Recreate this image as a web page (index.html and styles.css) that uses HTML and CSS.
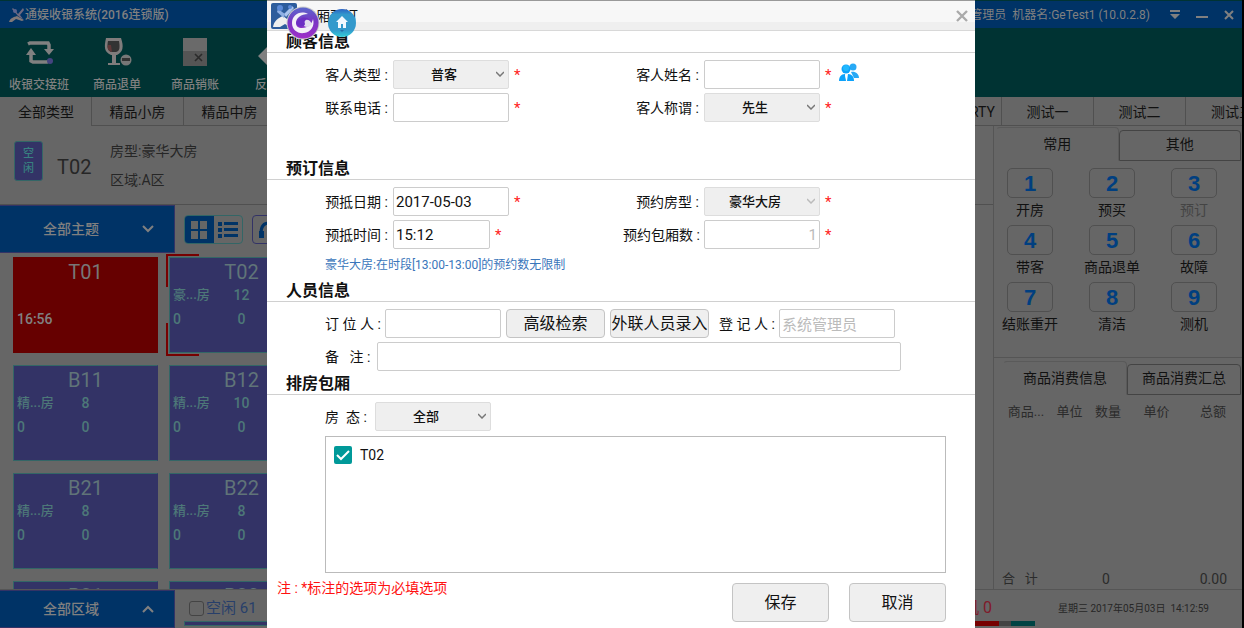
FILE: index.html
```html
<!DOCTYPE html>
<html lang="zh-CN">
<head>
<meta charset="utf-8">
<meta name="viewport" content="width=device-width, initial-scale=1">
<title>通娱收银系统</title>
<link rel="stylesheet" href="styles.css">
</head>
<body>
<div class="app">
  <header class="titlebar">
    <svg class="app-logo" width="18" height="16" viewBox="0 0 18 16"><path d="M1 15c1-4 5-5 8-6l7 4-2 1-6-2-4 3z" fill="#807878"/><path d="M5 1l5 6 5-6 1 2-4 5 3 4-2-1-3-2-6-7z" fill="#6e6a80"/><circle cx="7" cy="4" r="2" fill="#5d6590"/></svg>
    <span class="app-name">通娱收银系统(2016连锁版)</span>
    <span class="session">系统管理员&nbsp; 机器名:GeTest1 (10.0.2.8)</span>
    <button class="win-btn" aria-label="菜单"><svg width="12" height="12" viewBox="0 0 12 12"><path d="M1 1h10v2H1zM1 5h10l-5 5z" fill="#808080"/></svg></button>
    <button class="win-btn" aria-label="最小化"><svg width="12" height="12" viewBox="0 0 12 12"><path d="M0 7h12v2H0z" fill="#808080"/></svg></button>
    <button class="win-btn" aria-label="关闭"><svg width="12" height="12" viewBox="0 0 12 12"><path d="M2 2l8 8M10 2l-8 8" stroke="#808080" stroke-width="2"/></svg></button>
  </header>

  <nav class="toolbar">
    <button class="tool"><svg width="32" height="32" viewBox="0 0 32 32"><path d="M5 7l2-1h18l1 2v5M26 24l-2 1H10l-2-1v-8" fill="none" stroke="#808080" stroke-width="3.5"/><path d="M21 12h10l-5 6zM3 18l5-7 5 7z" fill="#808080"/><circle cx="27" cy="24" r="3" fill="#444480"/></svg>收银交接班</button>
    <button class="tool"><svg width="32" height="32" viewBox="0 0 32 32"><path d="M5 1h15c3 9 2 14-4 17h-6C3 15 3 10 5 1z" fill="#807c7c"/><path d="M7 4h11c1 6 1 10-3 11h-5C6 13 6 9 7 4z" fill="#333"/><path d="M7 8h3l1 7C7 14 6 11 7 8z" fill="#603838"/><path d="M11 17h4v9h4v2H7v-2h4z" fill="#807c7c"/><circle cx="25" cy="23" r="5.5" fill="#777"/><path d="M21 21h8v3h-8z" fill="#333"/></svg>商品退单</button>
    <button class="tool"><svg width="32" height="32" viewBox="0 0 32 32"><path d="M4 1h24v28H4z" fill="#6a6a6a"/><path d="M4 14h24v15H4z" fill="#555"/><path d="M16 17l7 7M23 17l-7 7" stroke="#2b2b2b" stroke-width="1.6"/></svg>商品销账</button>
    <button class="tool"><svg width="32" height="32" viewBox="0 0 32 32"><path d="M1 19L13 7v7h16v10H13v7z" fill="#808080"/></svg>反结账</button>
  </nav>

  <div class="type-tabs">
    <button class="type-tab active">全部类型</button>
    <button class="type-tab">精品小房</button>
    <button class="type-tab">精品中房</button>
    <span class="tab-fill"></span>
    <button class="type-tab party">PARTY</button>
    <button class="type-tab">测试一</button>
    <button class="type-tab">测试二</button>
    <button class="type-tab cut">测试三</button>
  </div>

  <main class="workspace">
    <section class="rooms">
      <div class="room-info">
        <span class="state-badge">空<br>闲</span>
        <span class="room-code">T02</span>
        <div class="room-meta"><span>房型:豪华大房</span><span>区域:A区</span></div>
      </div>
      <div class="filter-row">
        <button class="block-select">全部主题<svg width="12" height="8" viewBox="0 0 12 8"><path d="M1 1l5 5 5-5" fill="none" stroke="#808080" stroke-width="2"/></svg></button>
        <div class="view-switch">
          <button class="view on" aria-label="网格"><svg width="18" height="20" viewBox="0 0 18 20"><path d="M1 1h7v8H1zM10 1h7v8h-7zM1 11h7v8H1zM10 11h7v8h-7z" fill="#666"/></svg></button>
          <button class="view" aria-label="列表"><svg width="20" height="18" viewBox="0 0 20 18"><path d="M0 1h4v4H0zM6 1h14v3H6zM0 7h4v4H0zM6 7h14v3H6zM0 13h4v4H0zM6 13h14v3H6z" fill="#036"/></svg></button>
        </div>
        <button class="service" aria-label="服务"><svg width="20" height="20" viewBox="0 0 20 20"><path d="M4 13C4 6 7 3 12 3s7 4 7 9" fill="none" stroke="#036" stroke-width="3"/><path d="M2 11h5v7H2zM14 11h4v7h-4z" fill="#036"/></svg></button>
      </div>
      <div class="tiles">
        <button class="tile busy"><b>T01</b><span></span><span></span><span></span><span class="time">16:56</span></button>
        <button class="tile picked"><b>T02</b><span>豪...房</span><span class="num">12</span><span></span><span class="low">0</span><span class="num">0</span></button>
        <button class="tile"><b>B11</b><span>精...房</span><span class="num">8</span><span></span><span class="low">0</span><span class="num">0</span></button>
        <button class="tile"><b>B12</b><span>精...房</span><span class="num">10</span><span></span><span class="low">0</span><span class="num">0</span></button>
        <button class="tile"><b>B21</b><span>精...房</span><span class="num">8</span><span></span><span class="low">0</span><span class="num">0</span></button>
        <button class="tile"><b>B22</b><span>精...房</span><span class="num">8</span><span></span><span class="low">0</span><span class="num">0</span></button>
        <button class="tile"><b>B31</b></button>
        <button class="tile"><b>B32</b></button>
      </div>
    </section>

    <aside class="side">
      <div class="side-tabs">
        <button class="side-tab active">常用</button>
        <button class="side-tab">其他</button>
      </div>
      <div class="keys">
        <button class="key"><b>1</b>开房</button>
        <button class="key"><b>2</b>预买</button>
        <button class="key off"><b>3</b>预订</button>
        <button class="key"><b>4</b>带客</button>
        <button class="key"><b>5</b>商品退单</button>
        <button class="key"><b>6</b>故障</button>
        <button class="key"><b>7</b>结账重开</button>
        <button class="key"><b>8</b>清洁</button>
        <button class="key"><b>9</b>测机</button>
      </div>
      <div class="side-tabs goods-tabs">
        <button class="side-tab active">商品消费信息</button>
        <button class="side-tab">商品消费汇总</button>
      </div>
      <table class="goods">
        <thead><tr><th class="c1">商品...</th><th class="c2">单位</th><th class="c3">数量</th><th class="c4">单价</th><th class="c5">总额</th></tr></thead>
      </table>
      <div class="total"><span class="total-name">合&nbsp;&nbsp; 计</span><span class="total-count">0</span><span class="total-sum">0.00</span></div>
    </aside>
  </main>

  <footer class="statusbar">
    <button class="block-select">全部区域<svg width="12" height="8" viewBox="0 0 12 8"><path d="M1 7l5-5 5 5" fill="none" stroke="#808080" stroke-width="2"/></svg></button>
    <div class="idle">
      <label class="idle-label"><input type="checkbox" class="idle-box">空闲 61</label>
      <span class="idle-bar"></span>
    </div>
    <div class="test">
      <span class="test-label">机 0</span>
      <span class="test-bar"><i class="bar-red"></i><i class="bar-gray"></i><i class="bar-teal"></i></span>
    </div>
    <time class="clock">星期三 2017年05月03日&nbsp; 14:12:59</time>
  </footer>

  <div class="overlay">
    <form class="dialog" role="dialog" aria-label="包厢预订">
      <header class="dialog-head">
        <svg class="dialog-icon" width="26" height="26" viewBox="0 0 26 26"><rect width="26" height="26" rx="2" fill="#2d5c9c"/><path d="M2 24c1-6 5-9 10-11l12 9-3 3-7-4-5 3z" fill="#eee"/><path d="M13 11l8-8 2 2-8 9z" fill="#a9c3ee"/><path d="M7 6l7 5-1 4-7-6z" fill="#8fb0e4"/><circle cx="9" cy="5" r="3" fill="#5b8ad8"/><circle cx="19" cy="4" r="2" fill="#5b8ad8"/></svg>
        <h1 class="dialog-title">包厢预订</h1>
        <button type="button" class="close" aria-label="关闭"><svg width="12" height="12" viewBox="0 0 12 12"><path d="M1 1l10 10M11 1L1 11" stroke="#aaa" stroke-width="2.4"/></svg></button>
        <svg class="orb orb-swirl" width="34" height="34" viewBox="0 0 34 34"><defs><linearGradient id="g1" x1="0" y1="0" x2="0" y2="1"><stop offset="0" stop-color="#5a68cc"/><stop offset=".45" stop-color="#7a35c4"/><stop offset="1" stop-color="#9e30c8"/></linearGradient></defs><circle cx="17" cy="17" r="16.500" fill="#ccc"/><circle cx="17" cy="17" r="15.500" fill="url(#g1)"/><path d="M22 8C14 4 6 9 6 17c0 7 6 11 12 10 7-1 11-7 9-14-1 5-5 9-11 9-4 0-6-2-6-5 0-5 5-9 12-9z" fill="#f3f0f8"/><path d="M11 17c1-5 8-6 13-2l2 3c-2 3-5 4-8 2 1-3-3-5-7-3z" fill="#e2dcee"/><path d="M10 17c2-5 9-8 14-3-5-1-6 1-5 4 0 3-8 4-9-1z" fill="#6c2fc4"/></svg>
        <svg class="orb orb-home" width="28" height="28" viewBox="0 0 28 28"><defs><linearGradient id="g2" x1="0" y1="0" x2="0" y2="1"><stop offset="0" stop-color="#2b62c4"/><stop offset=".2" stop-color="#3399cc"/><stop offset=".75" stop-color="#3399cc"/><stop offset="1" stop-color="#33ccd8"/></linearGradient></defs><circle cx="14" cy="14" r="14" fill="url(#g2)"/><path d="M14 7l6 6h-2v6h-3v-4h-2v4h-3v-6H8z" fill="#f2f8ff"/><path d="M12 21h4l-2 2z" fill="#246fa8"/></svg>
      </header>

      <h2 class="section-title">顾客信息</h2>
      <div class="section customer">
        <div class="row">
          <div class="field first"><label for="kind">客人类型 :</label><span class="pick"><select id="kind"><option>普客</option></select><svg class="arrow" width="8" height="6" viewBox="0 0 8 6"><path d="M0 1l4 4 4-4" fill="none" stroke="#777" stroke-width="1.500"/></svg></span><i class="star">*</i></div>
          <div class="field"><label for="name">客人姓名 :</label><input id="name" class="text"><i class="star">*</i>
            <button type="button" class="people" aria-label="选择客人"><svg width="22" height="24" viewBox="0 0 22 24"><g fill="#28a9f5"><circle cx="15" cy="4" r="3.500"/><path d="M13 9c4-1 8 2 8 6h-5z"/></g><g fill="#0da2fa"><circle cx="8" cy="6" r="4.500"/><path d="M1 18c0-4 2-7 6-7l1 7zM9 18l1-7c4 0 6 3 6 7z"/></g><circle cx="8" cy="5" r="3" fill="#20b8ff"/><path d="M7 12h2l-1 4z" fill="#fff"/></svg></button></div>
        </div>
        <div class="row">
          <div class="field first"><label for="phone">联系电话 :</label><input id="phone" class="text"><i class="star">*</i></div>
          <div class="field"><label for="sex">客人称谓 :</label><span class="pick"><select id="sex"><option>先生</option></select><svg class="arrow" width="8" height="6" viewBox="0 0 8 6"><path d="M0 1l4 4 4-4" fill="none" stroke="#777" stroke-width="1.500"/></svg></span><i class="star">*</i></div>
        </div>
      </div>

      <h2 class="section-title">预订信息</h2>
      <div class="section">
        <div class="row">
          <div class="field first"><label for="date">预抵日期 :</label><input id="date" class="text" value="2017-05-03"><i class="star">*</i></div>
          <div class="field"><label for="rtype">预约房型 :</label><span class="pick"><select id="rtype"><option>豪华大房</option></select><svg class="arrow" width="8" height="6" viewBox="0 0 8 6"><path d="M0 1l4 4 4-4" fill="none" stroke="#bbb" stroke-width="1.500"/></svg></span><i class="star">*</i></div>
        </div>
        <div class="row">
          <div class="field first"><label for="time">预抵时间 :</label><input id="time" class="text short" value="15:12"><i class="star">*</i></div>
          <div class="field"><label for="count">预约包厢数 :</label><input id="count" class="text muted right" value="1" readonly><i class="star">*</i></div>
        </div>
        <p class="hint">豪华大房:在时段[13:00-13:00]的预约数无限制</p>
      </div>

      <h2 class="section-title">人员信息</h2>
      <div class="section people-section">
        <div class="row">
          <label class="w60" for="booker">订 位 人 :</label><input id="booker" class="text">
          <button type="button" class="btn">高级检索</button>
          <button type="button" class="btn">外联人员录入</button>
          <label class="reg" for="reg">登 记 人 :</label><input id="reg" class="text muted" value="系统管理员" readonly>
        </div>
        <div class="row">
          <label class="w52" for="memo">备&nbsp;&nbsp; 注 :</label><input id="memo" class="text memo">
        </div>
      </div>

      <h2 class="section-title">排房包厢</h2>
      <div class="section assign">
        <div class="row">
          <label class="w50" for="state">房&nbsp; 态 :</label><span class="pick"><select id="state"><option>全部</option></select><svg class="arrow" width="8" height="6" viewBox="0 0 8 6"><path d="M0 1l4 4 4-4" fill="none" stroke="#777" stroke-width="1.500"/></svg></span>
        </div>
        <div class="room-list">
          <label class="room-check"><input type="checkbox" class="check-input" checked><svg class="check-mark" width="18" height="18" viewBox="0 0 18 18"><rect width="18" height="18" rx="2" fill="#099"/><path d="M3 9l4 4 8-8" fill="none" stroke="#fff" stroke-width="2"/></svg>T02</label>
        </div>
      </div>

      <div class="dialog-foot">
        <p class="note">注 : *标注的选项为必填选项</p>
        <button type="button" class="btn big">保存</button>
        <button type="button" class="btn big">取消</button>
      </div>
    </form>
  </div>
</div>
</body>
</html>
```
FILE: styles.css
```css
* { box-sizing: border-box; }

body {
  margin: 0;
  background: #000;
  color: #111;
  font: 14px/20px Roboto, "Noto Sans CJK SC", sans-serif;
}

button, input, select {
  margin: 0;
  padding: 0;
  border: 0;
  background: none;
  color: inherit;
  font: inherit;
}

h1, h2, p { margin: 0; }
svg { display: block; }
i { font-style: normal; }

.app {
  position: relative;
  display: flex;
  flex-direction: column;
  height: 100vh;
  margin-right: 2px;
  overflow: hidden;
  background: #666;
}

/* Title bar and tools */
.titlebar {
  display: flex;
  align-items: center;
  flex: none;
  height: 28px;
  padding: 0 0 0 8px;
  border-top: 1px solid #033;
  background: #036;
  color: #808080;
  font-size: 12px;
  font-weight: 500;
}
.app-name { margin-left: -1px; }
.session { margin-left: auto; margin-right: 11px; font-weight: 400; }
.win-btn { display: grid; place-items: center; width: 27px; height: 26px; }

.toolbar {
  display: flex;
  flex: none;
  height: 69px;
  background: #033;
}
.tool {
  display: flex;
  flex-direction: column;
  align-items: center;
  gap: 6px;
  width: 78px;
  padding-top: 9px;
  color: #808080;
  font-size: 12px;
  line-height: 20px;
  font-weight: 500;
}

.type-tabs {
  display: flex;
  flex: none;
  height: 29px;
}
.type-tab {
  width: 92px;
  padding-top: 2px;
  border: solid #505050;
  border-width: 0 0 1px 1px;
  white-space: nowrap;
  overflow: hidden;
}
.type-tab.active { width: 91px; border-color: transparent; }
.type-tab.party { padding-right: 6px; text-align: right; }
.type-tab.cut { width: 57px; padding-left: 25px; text-align: left; }
.tab-fill { flex: 1; border-bottom: 1px solid #505050; }

/* Room area */
.workspace { display: flex; flex: 1; min-height: 0; }
.rooms {
  display: flex;
  flex-direction: column;
  flex: 1;
  min-width: 0;
}
.room-info {
  display: flex;
  align-items: center;
  height: 79px;
  padding-left: 14px;
  border-bottom: 1px solid #505050;
  color: #262626;
}
.state-badge {
  width: 29px;
  height: 40px;
  margin-bottom: 8px;
  padding-top: 4px;
  border: 1px solid #366;
  border-radius: 3px;
  background: #336;
  color: #388080;
  font-size: 11px;
  font-weight: 500;
  line-height: 15px;
  text-align: center;
}
.room-code { width: 52px; padding: 3px 0 0 14px; font-size: 20px; }
.room-meta {
  display: flex;
  flex-direction: column;
  gap: 9px;
  margin-left: 15px;
}

.filter-row { display: flex; height: 48px; flex: none; }
.block-select {
  display: flex;
  align-items: center;
  justify-content: space-between;
  width: 175px;
  padding: 0 20px 0 43px;
  border: 1px solid #336;
  border-left: 0;
  background: #036;
  color: #808080;
  font-weight: 500;
}
.view-switch {
  display: flex;
  width: 59px;
  height: 29px;
  margin: 10px 9px 0 9px;
  border: 1px solid #366;
  border-radius: 4px;
  overflow: hidden;
}
.view { display: grid; place-items: center; flex: 1; }
.view.on { background: #036; }
.service {
  display: grid;
  place-items: center;
  width: 29px;
  height: 29px;
  margin-top: 10px;
  border: 1px solid #336;
  border-radius: 4px;
}

.tiles {
  display: grid;
  grid-template-columns: repeat(auto-fill, 145px);
  grid-auto-rows: 96px;
  gap: 12px 11px;
  flex: 1;
  width: 314px;
  min-height: 0;
  padding: 4px 0 0 13px;
  overflow: hidden;
}
.tile {
  position: relative;
  display: grid;
  grid-template-columns: repeat(3, 1fr);
  grid-template-rows: 28px 18px 30px;
  align-items: center;
  align-content: start;
  padding: 0 3px;
  border: 1px solid #366;
  border-right-color: #336;
  background: #336;
  color: #4d7878;
  font-weight: 500;
  text-align: left;
}
.tile b {
  grid-column: 1 / 4;
  color: #607478;
  font-size: 20px;
  font-weight: 400;
  text-align: center;
}
.tile span { white-space: nowrap; font-size: 13px; }
.tile .num, .tile .low, .tile .time { font-size: 14px; }
.tile .num { text-align: center; }
.tile.busy { border-color: #600; background: #600; color: #808080; }
.tile.busy b { color: #777; }
.tile.picked::before,
.tile.picked::after {
  content: "";
  position: absolute;
  left: -4px;
  width: 31px;
  height: 31px;
  border: solid #700;
}
.tile.picked::before { top: -4px; border-width: 2px 0 0 2px; }
.tile.picked::after { bottom: -4px; border-width: 0 0 2px 2px; }

/* Right side panel */
.side {
  display: flex;
  flex-direction: column;
  flex: none;
  width: 249px;
  border-left: 1px solid #555;
}
.side-tabs {
  display: flex;
  align-items: flex-end;
  height: 35px;
  padding: 0 1px 0 2px;
}
.side-tab {
  flex: 1;
  height: 31px;
  padding-bottom: 3px;
  border: 1px solid #444;
  border-radius: 4px 4px 0 0;
  white-space: nowrap;
}
.side-tab.active { height: 34px; padding-bottom: 0; border-color: #5a5a5a #5a5a5a transparent transparent; }
.keys {
  display: grid;
  grid-template-columns: repeat(3, 62px);
  justify-content: space-between;
  gap: 5px;
  padding: 7px 17px 23px 5px;
  border-bottom: 1px solid #555;
}
.key {
  display: flex;
  flex-direction: column;
  align-items: center;
  gap: 2px;
  white-space: nowrap;
}
.key b {
  width: 46px;
  height: 30px;
  border: 1px solid #505050;
  border-radius: 5px;
  color: #003f80;
  font: bold 22px/29px "Liberation Sans", sans-serif;
}
.key.off { color: #444; }
.goods-tabs { height: 37px; padding-left: 9px; }
.goods-tabs .side-tab.active { flex: 0 0 124px; }
.goods {
  width: 236px;
  margin: 4px 0 0 9px;
  border-collapse: collapse;
  table-layout: fixed;
  color: #2b2b2b;
  font-size: 13px;
}
.goods th { height: 26px; padding: 0; font-weight: 400; }
.c1 { width: 46px; }
.c2 { width: 41px; }
.c3 { width: 36px; }
.c4 { width: 61px; }
.c5 { width: 52px; }
.total {
  display: grid;
  grid-template-columns: 94px 36px 1fr;
  margin-top: auto;
  padding: 0 15px 0 8px;
  color: #2b2b2b;
}
.total-name { font-size: 13px; }
.total-count { padding-left: 6px; }
.total-sum { text-align: right; }

/* Status bar */
.statusbar {
  display: flex;
  flex: none;
  height: 39px;
  border-top: 1px solid #555;
}
.idle, .test { display: flex; flex-direction: column; justify-content: space-between; padding-bottom: 2px; }
.idle { flex: 1; padding-left: 9px; }
.idle-label {
  display: flex;
  align-items: center;
  gap: 2px;
  padding: 8px 0 0 5px;
  color: #283f6a;
  font-size: 15px;
}
.idle-box {
  appearance: none;
  width: 15px;
  height: 15px;
  border: 1px solid #444;
  border-radius: 3px;
}
.idle-bar { height: 5px; border: 1px solid #366; background: #336; }
.test { width: 80px; }
.test-label { padding: 8px 43px 0 0; color: #801a2a; font-size: 16px; text-align: right; white-space: nowrap; }
.test-bar { display: flex; height: 5px; }
.bar-red { flex: 1; background: #700; }
.bar-gray { width: 12px; background: #444; }
.bar-teal { width: 24px; background: #044; }
.clock { width: 207px; padding: 9px 0 0 23px; color: #262626; font-size: 10px; white-space: nowrap; }

/* Booking dialog */
.overlay {
  position: absolute;
  inset: 0;
  display: flex;
  justify-content: center;
}
.dialog {
  width: 708px;
  max-width: 100%;
  border-top: 1px solid #999;
  background: #fff;
  overflow: auto;
}
.dialog-head {
  position: relative;
  display: flex;
  align-items: center;
  height: 30px;
  padding: 0 7px 0 4px;
  border-bottom: 1px solid #d8d8d8;
  background: linear-gradient(#f7f7f7 21px, #efefef 21px);
}
.dialog-title { margin-left: 5px; font-size: 14px; font-weight: 400; line-height: 28px; }
.close { margin-left: auto; }
.orb { position: absolute; }
.orb-swirl { left: 19px; top: 5px; }
.orb-home { left: 61px; top: 8px; }

.section-title {
  height: 22px;
  padding-left: 19px;
  border-bottom: 1px solid #d0d0d0;
  font-size: 16px;
  font-weight: 700;
  line-height: 22px;
}
.section { padding: 7px 29px 0 58px; }
.customer { padding-bottom: 36px; }
.row { display: flex; align-items: center; height: 29px; white-space: nowrap; }
.row + .row { margin-top: 4px; }
.field { display: flex; align-items: center; }
.field label { width: 81px; padding-right: 5px; text-align: right; }
.field.first { width: 298px; }
.field.first label { width: 68px; }

.text {
  width: 116px;
  height: 29px;
  padding: 0 2px;
  border: 1px solid #ccc;
  border-radius: 2px;
  background: #fff;
  font-size: 15px;
}
.text.short { width: 97px; }
.text.muted { color: #bbb; }
.text.right { text-align: right; }
.text.memo { width: 524px; }
.pick { position: relative; width: 116px; }
.pick select {
  appearance: none;
  display: block;
  width: 100%;
  height: 29px;
  padding-right: 14px;
  border: 1px solid #ddd;
  border-radius: 2px;
  background: #efefef;
  font-size: 13px;
  font-weight: 500;
  text-align: center;
  text-align-last: center;
}
.arrow { position: absolute; right: 5px; top: 11px; pointer-events: none; }
.star { width: 6px; margin-left: 5px; color: #f22; font-size: 15px; }
.people { margin-left: 7px; }

.hint { color: #3a76bb; font-size: 12px; line-height: 32px; height: 31px; }
.people-section { padding-bottom: 2px; }
.w60 { width: 60px; }
.w52 { width: 52px; }
.w50 { width: 50px; }
.reg { margin-left: 10px; width: 60px; }
.btn {
  height: 29px;
  min-width: 99px;
  border: 1px solid #c4c4c4;
  border-radius: 4px;
  background: #efefef;
  font-size: 16px;
}
.row .btn { margin-left: 5px; }

.room-list {
  height: 137px;
  margin-top: 5px;
  padding: 8px;
  border: 1px solid #bbb;
}
.room-check { position: relative; display: inline-flex; align-items: center; gap: 8px; }
.check-input { position: absolute; width: 18px; height: 18px; opacity: 0; }

.dialog-foot {
  display: flex;
  gap: 20px;
  padding: 10px 29px 7px 10px;
}
.note { flex: 1; margin-top: -5px; color: #f11; }
.btn.big { width: 97px; min-width: 0; height: 39px; }
```
